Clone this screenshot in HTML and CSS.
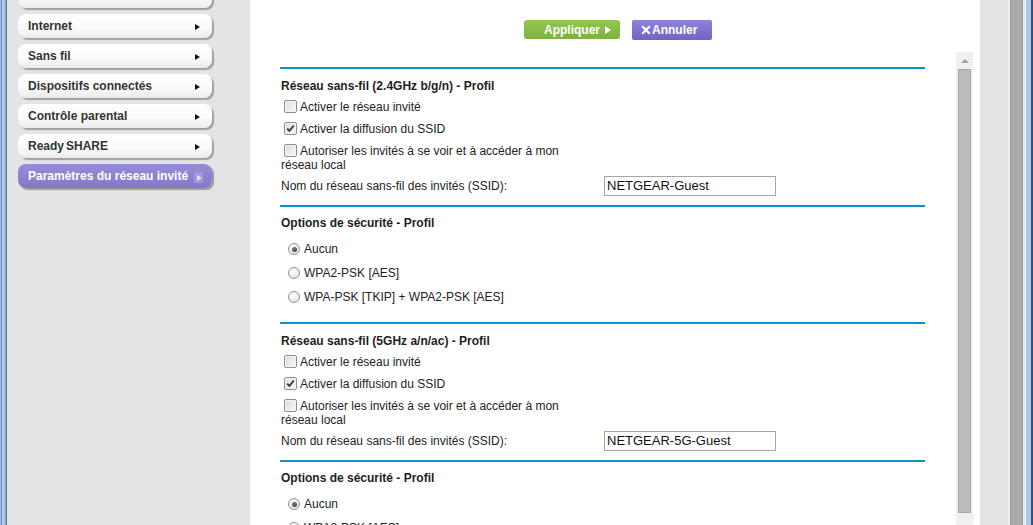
FILE: index.html
```html
<!DOCTYPE html>
<html lang="fr">
<head>
<meta charset="utf-8">
<title>Paramètres du réseau invité</title>
<link rel="stylesheet" href="styles.css">
</head>
<body>
<div class="window">
  <div class="frame-left"></div>
  <aside class="sidebar">
    <ul class="menu">
      <li class="item first"><span>&nbsp;</span><i class="arrow"></i></li>
      <li class="item"><span>Internet</span><i class="arrow"></i></li>
      <li class="item"><span>Sans fil</span><i class="arrow"></i></li>
      <li class="item"><span>Dispositifs connectés</span><i class="arrow"></i></li>
      <li class="item"><span>Contrôle parental</span><i class="arrow"></i></li>
      <li class="item"><span>Ready<span class="tight">SHARE</span></span><i class="arrow"></i></li>
      <li class="item active"><span>Paramètres du réseau invité</span><i class="arrow-box"><i class="arrow"></i></i></li>
    </ul>
  </aside>
  <main class="main">
    <div class="actions">
      <button class="btn btn-apply">Appliquer<i class="play"></i></button>
      <button class="btn btn-cancel"><svg class="x" width="10" height="10" viewBox="0 0 10 10"><path d="M1.2 1.2 L8.8 8.8 M8.8 1.2 L1.2 8.8" stroke="#fff" stroke-width="2.2" fill="none"/></svg>Annuler</button>
    </div>
    <div class="panel">
      <div class="content">
        <div class="line"></div>
        <div class="heading">Réseau sans-fil (2.4GHz b/g/n) - Profil</div>
        <div class="row"><span class="cb"></span>Activer le réseau invité</div>
        <div class="row"><span class="cb checked"><svg width="11" height="11" viewBox="0 0 11 11"><path d="M2.2 5.6 L4.4 7.9 L8.8 2.6" stroke="#3a3a3a" stroke-width="1.8" fill="none"/></svg></span>Activer la diffusion du SSID</div>
        <div class="row wrap"><span class="cb"></span>Autoriser les invités à se voir et à accéder à mon réseau local</div>
        <div class="row name"><span class="name-label">Nom du réseau sans-fil des invités (SSID):</span><span class="field">NETGEAR-Guest</span></div>
        <div class="line gap"></div>
        <div class="heading opt">Options de sécurité - Profil</div>
        <div class="radios">
          <div class="rrow"><span class="rb on"></span>Aucun</div>
          <div class="rrow"><span class="rb"></span>WPA2-PSK [AES]</div>
          <div class="rrow"><span class="rb"></span>WPA-PSK [TKIP] + WPA2-PSK [AES]</div>
        </div>
        <div class="line"></div>
        <div class="heading">Réseau sans-fil (5GHz a/n/ac) - Profil</div>
        <div class="row"><span class="cb"></span>Activer le réseau invité</div>
        <div class="row"><span class="cb checked"><svg width="11" height="11" viewBox="0 0 11 11"><path d="M2.2 5.6 L4.4 7.9 L8.8 2.6" stroke="#3a3a3a" stroke-width="1.8" fill="none"/></svg></span>Activer la diffusion du SSID</div>
        <div class="row wrap"><span class="cb"></span>Autoriser les invités à se voir et à accéder à mon réseau local</div>
        <div class="row name"><span class="name-label">Nom du réseau sans-fil des invités (SSID):</span><span class="field">NETGEAR-5G-Guest</span></div>
        <div class="line gap"></div>
        <div class="heading opt">Options de sécurité - Profil</div>
        <div class="radios">
          <div class="rrow"><span class="rb on"></span>Aucun</div>
          <div class="rrow"><span class="rb"></span>WPA2-PSK [AES]</div>
          <div class="rrow"><span class="rb"></span>WPA-PSK [TKIP] + WPA2-PSK [AES]</div>
        </div>
      </div>
      <div class="scrollbar">
        <div class="sb-up"><i></i></div>
        <div class="sb-thumb"></div>
      </div>
    </div>
  </main>
  <div class="frame-right">
    <div class="fr-grey"></div>
    <div class="fr-hl"></div>
    <div class="fr-bar"></div>
    <div class="fr-light"></div>
    <div class="fr-blue"></div>
    <div class="fr-dark"></div>
  </div>
</div>
</body>
</html>
```

FILE: styles.css
```css
* { box-sizing: border-box; }
html, body { margin: 0; padding: 0; }
body {
  width: 1033px;
  height: 525px;
  overflow: hidden;
  font-family: "Liberation Sans", Arial, sans-serif;
  font-size: 12px;
  color: #222;
  background: #fff;
}
.window {
  display: flex;
  height: 525px;
  overflow: hidden;
}
.frame-left {
  width: 7px;
  flex: none;
  background: linear-gradient(to right, #9cbde2 0, #9cbde2 1px, #6f8fb5 1px, #6f8fb5 2px, #aacbef 2px, #aacbef 5px, #86a6cb 5px, #86a6cb 6px, #5d7595 6px);
}
.sidebar {
  width: 243px;
  flex: none;
  background: #e4e4e4;
  padding-left: 11px;
}
.menu {
  list-style: none;
  margin: 0;
  padding: 0;
}
.item {
  width: 194px;
  height: 24px;
  margin-bottom: 6px;
  border-radius: 8px;
  background: linear-gradient(#ffffff 0%, #fbfbfb 55%, #ebebeb 100%);
  box-shadow: 2px 2px 1px #a0a0a0;
  display: flex;
  align-items: center;
  justify-content: space-between;
  padding: 0 12px 0 10px;
  font-weight: bold;
  color: #333;
  line-height: 24px;
}
.item.first { margin-top: -16px; }
.tight { margin-left: 2px; }
.arrow {
  width: 0;
  height: 0;
  border-left: 5px solid #111;
  border-top: 3.5px solid transparent;
  border-bottom: 3.5px solid transparent;
  margin-top: 2px;
}
.item.active {
  background: linear-gradient(#968dd8 0%, #8b81cf 60%, #8278c6 100%);
  color: #fff;
  box-shadow: 2px 2px 1px #9a9a9a;
  padding-right: 9px;
}
.arrow-box {
  width: 9px;
  height: 11px;
  margin-top: 3px;
  background: #a197e0;
  display: flex;
  align-items: center;
  justify-content: center;
}
.arrow-box .arrow {
  border-left-color: #e4e0fa;
  margin: 0 0 0 1px;
}
.main {
  width: 730px;
  flex: none;
  background: #fff;
  padding-left: 30px;
}
.actions {
  height: 52px;
  padding-top: 20px;
  padding-left: 244px;
  display: flex;
  gap: 12px;
}
.btn {
  height: 19px;
  border: none;
  border-radius: 3px;
  color: #fff;
  font-family: "Liberation Sans", Arial, sans-serif;
  font-size: 12px;
  font-weight: bold;
  display: flex;
  align-items: center;
  padding: 0;
  cursor: pointer;
}
.btn-apply {
  width: 96px;
  padding-left: 20px;
  background: linear-gradient(#93c651, #7eb23b);
}
.play {
  width: 0;
  height: 0;
  border-left: 6px solid #fff;
  border-top: 4px solid transparent;
  border-bottom: 4px solid transparent;
  margin-left: 5px;
}
.btn-cancel {
  width: 80px;
  height: 20px;
  padding-left: 9px;
  border-radius: 2px;
  background: linear-gradient(#8f84dc, #6f64c2);
}
.x { margin-right: 1px; }
.panel {
  display: flex;
  height: 473px;
}
.content {
  width: 645px;
  flex: none;
  padding-top: 15px;
}
.line {
  height: 2px;
  background: #0a94c9;
}
.line.gap { margin-top: 9px; }
.heading {
  margin-top: 7px;
  height: 20px;
  line-height: 20px;
  padding-left: 1px;
  font-weight: bold;
  color: #1e1e1e;
}
.heading.opt { margin-top: 6px; }
.row {
  height: 22px;
  line-height: 22px;
  padding-left: 1px;
}
.row.wrap {
  height: 36px;
  width: 318px;
  line-height: 14px;
  padding-top: 4px;
}
.row.name {
  height: 20px;
  line-height: 20px;
  display: flex;
  align-items: center;
}
.name-label { width: 323px; flex: none; }
.field {
  width: 172px;
  height: 20px;
  border: 1px solid #a6a6a6;
  font-size: 13px;
  line-height: 18px;
  padding-left: 2px;
  color: #111;
}
.cb {
  display: inline-block;
  width: 13px;
  height: 13px;
  margin: 0 3px;
  vertical-align: -2px;
  border: 1px solid #8f8f8f;
  border-radius: 2px;
  background: linear-gradient(135deg, #dcdcdc, #f8f8f8);
  box-shadow: inset 0 0 0 1px #f4f4f4;
}
.cb svg { display: block; margin: 0; }
.radios { margin-top: 4px; margin-bottom: 13px; }
.rrow {
  height: 24px;
  line-height: 24px;
  padding-left: 8px;
}
.rb {
  display: inline-block;
  width: 12px;
  height: 12px;
  margin-right: 4px;
  vertical-align: -2px;
  border-radius: 50%;
  border: 1px solid #959595;
  background: radial-gradient(circle at 40% 35%, #ffffff 0%, #f0f0f0 45%, #d6d6d6 100%);
  position: relative;
}
.rb.on::after {
  content: "";
  position: absolute;
  left: 2.5px;
  top: 2.5px;
  width: 5px;
  height: 5px;
  border-radius: 50%;
  background: radial-gradient(circle at 40% 35%, #7a7a7a, #333);
}
.scrollbar {
  width: 17px;
  margin-left: 31px;
  background: #f0f0f0;
  display: flex;
  flex-direction: column;
  align-items: center;
  flex: none;
}
.sb-up {
  height: 17px;
  width: 17px;
  display: flex;
  align-items: center;
  justify-content: center;
}
.sb-up i {
  width: 0;
  height: 0;
  border-bottom: 4px solid #a0a0a0;
  border-left: 4px solid transparent;
  border-right: 4px solid transparent;
}
.sb-thumb {
  width: 13px;
  height: 444px;
  background: #bcbcbc;
  border: 1px solid #a8a8a8;
}
.frame-right {
  display: flex;
  flex: 1;
}
.fr-grey { width: 28px; background: #e4e4e4; }
.fr-hl { width: 2px; background: #eeeeee; }
.fr-bar { width: 13px; background: #aaaaaa; border-left: 1px solid #9a9a9a; border-right: 1px solid #9a9a9a; }
.fr-light { width: 3px; background: #e8eef5; }
.fr-blue { width: 5px; background: #a8c9ee; }
.fr-dark { width: 2px; background: #3e5068; }
```
